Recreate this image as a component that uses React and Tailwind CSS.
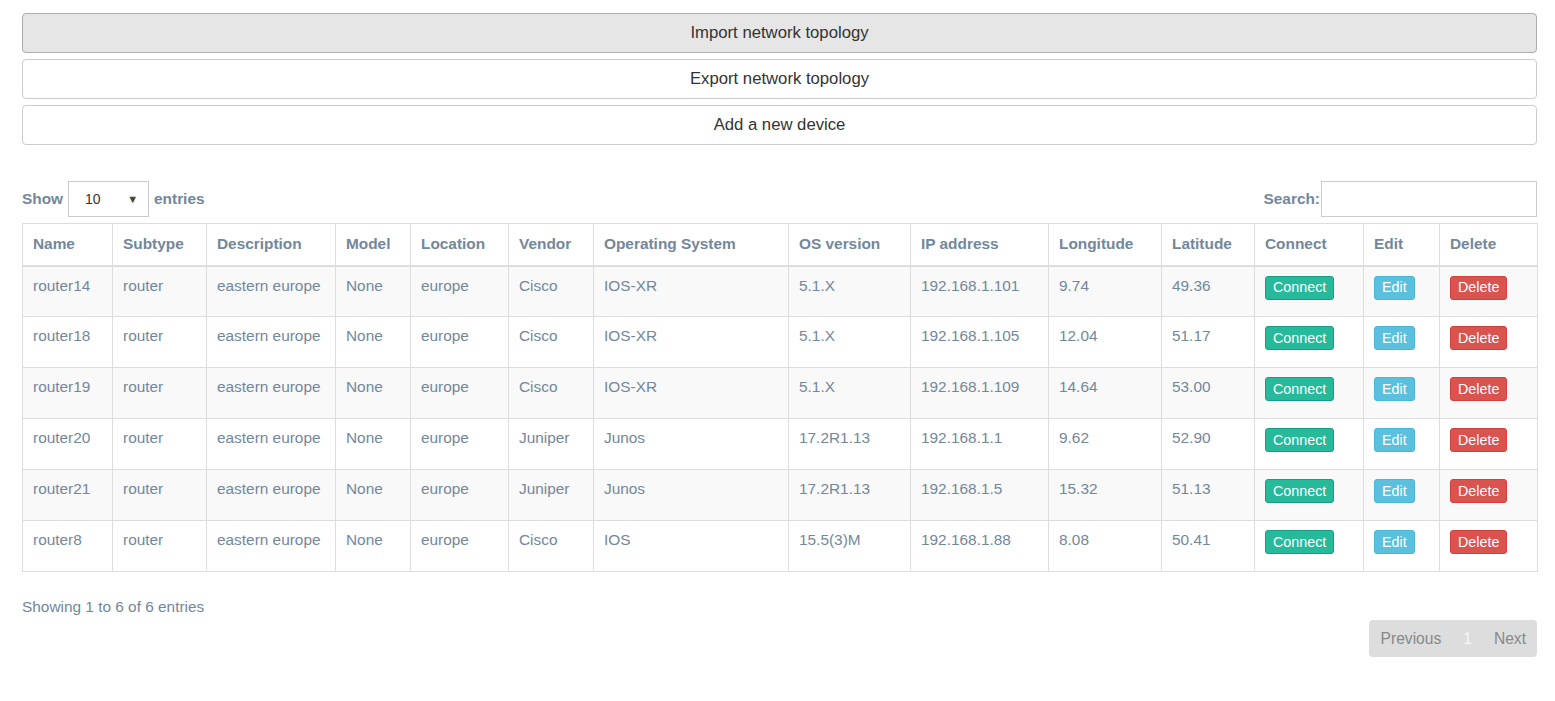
import React from 'react';

const devices = [
  { name: 'router14', subtype: 'router', description: 'eastern europe', model: 'None', location: 'europe', vendor: 'Cisco', os: 'IOS-XR', version: '5.1.X', ip: '192.168.1.101', lon: '9.74', lat: '49.36' },
  { name: 'router18', subtype: 'router', description: 'eastern europe', model: 'None', location: 'europe', vendor: 'Cisco', os: 'IOS-XR', version: '5.1.X', ip: '192.168.1.105', lon: '12.04', lat: '51.17' },
  { name: 'router19', subtype: 'router', description: 'eastern europe', model: 'None', location: 'europe', vendor: 'Cisco', os: 'IOS-XR', version: '5.1.X', ip: '192.168.1.109', lon: '14.64', lat: '53.00' },
  { name: 'router20', subtype: 'router', description: 'eastern europe', model: 'None', location: 'europe', vendor: 'Juniper', os: 'Junos', version: '17.2R1.13', ip: '192.168.1.1', lon: '9.62', lat: '52.90' },
  { name: 'router21', subtype: 'router', description: 'eastern europe', model: 'None', location: 'europe', vendor: 'Juniper', os: 'Junos', version: '17.2R1.13', ip: '192.168.1.5', lon: '15.32', lat: '51.13' },
  { name: 'router8', subtype: 'router', description: 'eastern europe', model: 'None', location: 'europe', vendor: 'Cisco', os: 'IOS', version: '15.5(3)M', ip: '192.168.1.88', lon: '8.08', lat: '50.41' },
];

const columns = [
  ['Name', 90], ['Subtype', 94], ['Description', 129], ['Model', 75], ['Location', 98],
  ['Vendor', 85], ['Operating System', 195], ['OS version', 122], ['IP address', 138],
  ['Longitude', 113], ['Latitude', 93], ['Connect', 109], ['Edit', 76], ['Delete', 98],
];

const cell = 'border border-[#dddddd] px-[10px] pt-[8px] align-top h-[51px] leading-[21px]';

const App = () => {
  return (
    <div className="min-h-screen bg-white pl-[22px] pr-[18px] pt-[13px] text-[#73879C] font-['Liberation_Sans',Arial,sans-serif]">
      {/* Topology actions */}
      <div className="flex flex-col gap-[6px] text-[16.7px] text-[#333333]">
        <button className="h-[40px] w-full rounded-[4px] border border-[#adadad] bg-[#e6e6e6]">
          Import network topology
        </button>
        <button className="h-[40px] w-full rounded-[4px] border border-[#cccccc] bg-white">
          Export network topology
        </button>
        <button className="h-[40px] w-full rounded-[4px] border border-[#cccccc] bg-white">
          Add a new device
        </button>
      </div>

      {/* Table controls */}
      <div className="mt-[36px] flex items-center justify-between text-[15.4px] font-bold">
        <div className="flex items-center gap-[5px]">
          <span>Show</span>
          <div className="flex h-[36px] w-[81px] items-center justify-between border border-[#cccccc] bg-white pl-[16px] pr-[10px] text-[14px] font-normal text-[#333333]">
            <span>10</span>
            <span className="text-[11px] text-[#444444]">▼</span>
          </div>
          <span>entries</span>
        </div>
        <div className="flex items-center">
          <span>Search:</span>
          <input className="ml-[1px] h-[36px] w-[216px] border border-[#cccccc] bg-white outline-none" />
        </div>
      </div>

      {/* Devices table */}
      <table className="mt-[6px] w-full table-fixed border-collapse text-[15.4px]">
        <colgroup>
          {columns.map(([label, w]) => (
            <col key={label} style={{ width: w }} />
          ))}
        </colgroup>
        <thead>
          <tr>
            {columns.map(([label]) => (
              <th key={label} className="h-[42px] border border-b-2 border-[#dddddd] px-[10px] pb-[2px] text-left align-middle font-bold">
                {label}
              </th>
            ))}
          </tr>
        </thead>
        <tbody>
          {devices.map((d, i) => (
            <tr key={d.name} className={i % 2 === 0 ? 'bg-[#f9f9f9]' : 'bg-white'}>
              <td className={cell}>{d.name}</td>
              <td className={cell}>{d.subtype}</td>
              <td className={cell}>{d.description}</td>
              <td className={cell}>{d.model}</td>
              <td className={cell}>{d.location}</td>
              <td className={cell}>{d.vendor}</td>
              <td className={cell}>{d.os}</td>
              <td className={cell}>{d.version}</td>
              <td className={cell}>{d.ip}</td>
              <td className={cell}>{d.lon}</td>
              <td className={cell}>{d.lat}</td>
              <td className={cell}>
                <button className="mt-[1px] h-[24px] rounded-[3px] border border-[#169F85] bg-[#26B99A] px-[7px] text-[14.3px] leading-none text-white">
                  Connect
                </button>
              </td>
              <td className={cell}>
                <button className="mt-[1px] h-[24px] rounded-[3px] border border-[#46b8da] bg-[#5bc0de] px-[7px] text-[14.3px] leading-none text-white">
                  Edit
                </button>
              </td>
              <td className={cell}>
                <button className="mt-[1px] h-[24px] rounded-[3px] border border-[#d43f3a] bg-[#d9534f] px-[7px] text-[14.3px] leading-none text-white">
                  Delete
                </button>
              </td>
            </tr>
          ))}
        </tbody>
      </table>

      {/* Footer */}
      <div className="mt-[23px] text-[15.4px]">Showing 1 to 6 of 6 entries</div>
      <div className="mt-[2px] flex justify-end">
        <div className="flex h-[37px] items-center rounded-[4px] bg-[#dddddd] pl-[12px] pr-[11px] text-[15.6px]">
          <span className="text-[#888888]">Previous</span>
          <span className="px-[22px] text-[#f5f5f5]">1</span>
          <span className="text-[#888888]">Next</span>
        </div>
      </div>
    </div>
  );
};

export default App;
